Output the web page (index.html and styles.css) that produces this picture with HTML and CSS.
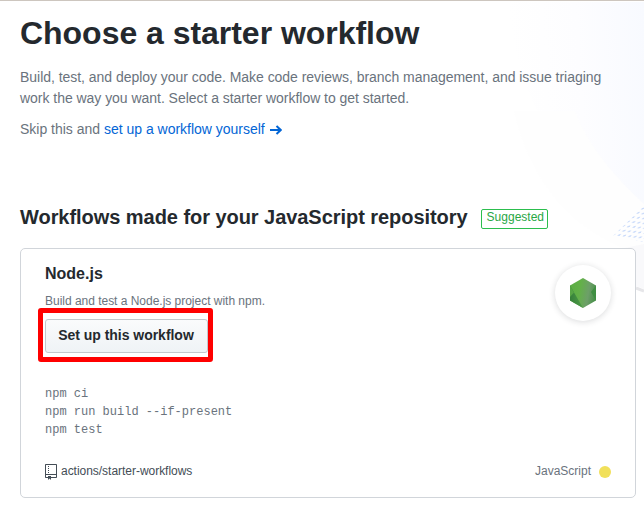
FILE: index.html
```html
<!DOCTYPE html>
<html lang="en">
<head>
<meta charset="utf-8">
<title>Choose a starter workflow</title>
<link rel="stylesheet" href="styles.css">
</head>
<body>
<svg class="backdrop" width="644" height="514" viewBox="0 0 644 514" aria-hidden="true">
  <defs>
    <linearGradient id="haze" x1="0" x2="1" y1=".1" y2="0"><stop offset="0" stop-color="#fff"/><stop offset=".5" stop-color="#fdfdff"/><stop offset="1" stop-color="#f8faff"/></linearGradient>
    <pattern id="dots" width="5.3" height="4.8" patternUnits="userSpaceOnUse" patternTransform="translate(614 232) rotate(6) skewX(-42)"><circle cx="1.5" cy="1.5" r="1.15" fill="#c9dafa"/></pattern>
  </defs>
  <path d="M508 1H644V223C590 190 520 130 508 1Z" fill="url(#haze)"/>
  <path d="M514 110C530 180 570 225 625 248H644V203C620 180 590 150 575 110Z" fill="#fefefe"/>
  <path d="M613 235L644 205V241Z" fill="url(#dots)"/>
  <path d="M620 248L644 243V288L636 285V258Z" fill="#f9f9fb"/>
  <path d="M636 287L644 290" stroke="#e6e6e9" stroke-width="3"/>
</svg>
<main class="page">
  <h1 class="title">Choose a starter workflow</h1>
  <p class="lead">Build, test, and deploy your code. Make code reviews, branch management, and issue triaging work the way you want. Select a starter workflow to get started.</p>
  <p class="skip">Skip this and <a class="link" href="#">set up a workflow yourself <svg class="arrow" width="12" height="10" viewBox="0 0 12 10"><path d="M0 5H10M6.5 1L10.7 5L6.5 9" fill="none" stroke="currentColor" stroke-width="2"/></svg></a></p>
  <div class="section-head">
    <h2 class="section-title">Workflows made for your JavaScript repository</h2>
    <span class="label">Suggested</span>
  </div>
  <article class="card">
    <div class="card-head">
      <div>
        <h3 class="name">Node.js</h3>
        <p class="desc">Build and test a Node.js project with npm.</p>
        <div class="highlight"><button class="btn">Set up this workflow</button></div>
      </div>
      <div class="badge">
        <svg width="26" height="30" viewBox="0 0 26 30">
          <defs>
            <linearGradient id="green" x1="0" x2="1" y1=".4" y2=".6"><stop offset="0" stop-color="#5cae44"/><stop offset=".35" stop-color="#63b148"/><stop offset=".7" stop-color="#6d9f69"/><stop offset="1" stop-color="#468f47"/></linearGradient>
            <linearGradient id="shade" x1="0" x2="1" y1="0" y2="0"><stop offset="0" stop-color="#36803a"/><stop offset="1" stop-color="#4f9d48"/></linearGradient>
          </defs>
          <path d="M13 0L26 7.5V22.5L13 30L0 22.5V7.5Z" fill="url(#green)"/>
          <path d="M0 7.5L13 30L0 22.5Z" fill="url(#shade)"/>
          <path d="M0 7.5L4 14.5L0 19Z" fill="#57a545"/>
          <path d="M26 7.5L21 14L26 22.5Z" fill="#3f8f42"/>
        </svg>
      </div>
    </div>
    <pre class="code">npm ci
npm run build --if-present
npm test</pre>
    <div class="card-foot">
      <span class="repo"><svg class="repo-icon" width="12" height="16" viewBox="0 0 12 16"><path fill-rule="evenodd" d="M4 9H3V8h1v1zm0-3H3v1h1V6zm0-2H3v1h1V4zm0-2H3v1h1V2zm8-1v12c0 .55-.45 1-1 1H6v2l-1.5-1.5L3 16v-2H1c-.55 0-1-.45-1-1V1c0-.55.45-1 1-1h10c.55 0 1 .45 1 1zm-1 10H1v2h2v-1h3v1h5v-2zm0-10H1v9h10V1z"/></svg>actions/starter-workflows</span>
      <span class="lang">JavaScript<i class="dot"></i></span>
    </div>
  </article>
</main>
</body>
</html>
```
FILE: styles.css
```css
* { box-sizing: border-box; }
body {
  margin: 0;
  height: 514px;
  overflow: hidden;
  position: relative;
  background: #fff;
  border-top: 1px solid #cdc6bf;
  color: #24292e;
  font: 14px/21px "Liberation Sans", Arial, sans-serif;
}
h1, h2, h3, p, pre { margin: 0; }
.backdrop { position: absolute; left: 0; top: 0; z-index: -1; }
.page { padding: 8px 8px 0 20px; }
.title { font-size: 32px; line-height: 48px; letter-spacing: -.03px; }
.lead { width: 600px; margin-top: 10px; line-height: 21px; letter-spacing: -.035px; color: #6a737d; }
.skip { margin-top: 10px; color: #6a737d; letter-spacing: -.01px; }
.link { color: #0366d6; text-decoration: none; }
.arrow { margin-left: 1px; vertical-align: -1px; }
.section-head { display: flex; align-items: center; margin-top: 62px; height: 30px; }
.section-title { font-size: 20px; line-height: 30px; letter-spacing: -.048px; }
.label {
  margin: 4px 0 0 13px;
  height: 20px;
  padding: 0 3px 0 5px;
  border: 1px solid #2cbe4e;
  border-radius: 2px;
  background: #fff;
  color: #28a745;
  font-size: 12px;
  line-height: 15px;
}
.card {
  display: flex;
  flex-direction: column;
  height: 250px;
  margin-top: 16px;
  padding: 14px 24px 0;
  border: 1px solid #d1d5da;
  border-radius: 5px;
  background: #fff;
}
.card-head { display: flex; justify-content: space-between; }
.name { font-size: 16px; line-height: 22px; }
.desc { margin-top: 7px; color: #6a737d; font-size: 12px; line-height: 18px; letter-spacing: -.02px; }
.highlight {
  width: 175px;
  height: 54px;
  margin: -2px 0 0 -7px;
  padding: 6px 2px;
  border: 5px solid #f00;
  border-radius: 3px;
}
.btn {
  display: block;
  width: 163px;
  height: 34px;
  padding: 0 1px 2px 0;
  border: 1px solid #c3c8cd;
  border-radius: 3px;
  background: linear-gradient(#fafbfc, #eff3f6);
  color: #24292e;
  font: bold 14px/20px "Liberation Sans", Arial, sans-serif;
  letter-spacing: -.03px;
}
.badge {
  display: flex;
  align-items: center;
  justify-content: center;
  width: 56px;
  height: 56px;
  margin-top: 2px;
  border-radius: 50%;
  background: #fff;
  box-shadow: 0 1px 6px rgba(27, 31, 35, .16);
}
.code { margin-top: 23px; color: #6a737d; font: 12px/18px "Liberation Mono", monospace; }
.card-foot { display: flex; justify-content: space-between; margin-top: 23px; font-size: 12px; line-height: 18px; }
.repo { display: flex; align-items: center; gap: 4px; color: #444d56; letter-spacing: -.03px; }
.repo-icon { margin: 2px 0 0; height: 16px; fill: #444d56; }
.lang { display: flex; align-items: center; gap: 8px; color: #6a737d; }
.dot { width: 12px; height: 12px; margin-top: 1px; border-radius: 50%; background: #f1e05a; }
```
